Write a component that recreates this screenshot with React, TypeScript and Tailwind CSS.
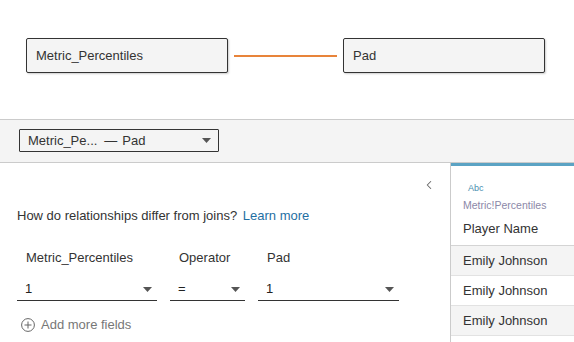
import { ChevronLeft } from "lucide-react";

// Relationship editor: canvas with two logical tables, a relationship picker
// and the field-pair editor with a data preview on the right.
const FONT = "font-['Liberation_Sans',Arial,sans-serif]";

function Caret() {
  return (
    <svg width="9" height="5" viewBox="0 0 9 5" className="flex-shrink-0">
      <path d="M0 0h9L4.5 5z" fill="#555" />
    </svg>
  );
}

function TableBox({ name }: { name: string }) {
  return (
    <div className="w-[202px] h-[35px] flex items-center px-[9px] bg-[#f4f4f4] border border-[#333] rounded-[2px] shadow-[1px_1px_2px_rgba(0,0,0,0.2)] text-[13px] text-[#333]">
      {name}
    </div>
  );
}

const fields = [
  { label: "Metric_Percentiles", value: "1", width: "w-[140px]" },
  { label: "Operator", value: "=", width: "w-[75px]" },
  { label: "Pad", value: "1", width: "w-[141px]" },
];

const rows = ["Emily Johnson", "Emily Johnson", "Emily Johnson"];

export default function App() {
  return (
    <div className={`w-[574px] h-[342px] overflow-hidden bg-white flex flex-col ${FONT}`}>
      {/* Canvas */}
      <div className="h-[119px] flex-shrink-0 flex items-start pt-[38px] pl-[26px]">
        <TableBox name="Metric_Percentiles" />
        <div className="w-[103px] h-[2px] bg-[#e8843a] mx-[6px] self-start mt-[17px]" />
        <TableBox name="Pad" />
      </div>

      {/* Relationship picker band */}
      <div className="h-[44px] flex-shrink-0 bg-[#f4f4f4] border-y border-[#cbcbcb] pt-[9px] pl-[19px]">
        <div className="w-[200px] h-[23px] bg-[#f4f4f4] border border-[#333] rounded-[1px] flex items-center pl-[8px] pr-[7px] text-[13px] text-[#333]">
          <span>Metric_Pe...</span>
          <span className="ml-[7px]">—</span>
          <span className="ml-[5px] flex-1">Pad</span>
          <Caret />
        </div>
      </div>

      <div className="flex flex-1 min-h-0">
        {/* Field editor */}
        <div className="w-[450px] flex-shrink-0 flex flex-col pl-[17px]">
          <div className="mt-[15px] h-[14px] flex justify-end pr-[14px] text-[#666]">
            <ChevronLeft size={14} strokeWidth={1.8} />
          </div>
          <div className="mt-[16px] h-[16px] leading-[16px] text-[13px] text-[#333]">
            How do relationships differ from joins?{" "}
            <span className="ml-[2px] text-[#1f6fa3]">Learn more</span>
          </div>
          <div className="mt-[26px] flex gap-[13px]">
            {fields.map((f) => (
              <div key={f.label} className={`${f.width} flex flex-col`}>
                <div className="h-[16px] leading-[16px] pl-[9px] text-[13px] text-[#333]">
                  {f.label}
                </div>
                <div className="mt-[12px] h-[23px] flex items-center pl-[8px] pr-[5px] border-b-[1.5px] border-[#333] text-[13px] text-[#222]">
                  <span className="flex-1">{f.value}</span>
                  <Caret />
                </div>
              </div>
            ))}
          </div>
          <div className="mt-[17px] h-[14px] flex items-center gap-[6px] pl-[4px] text-[13px] text-[#777]">
            <svg width="14" height="14" viewBox="0 0 14 14" className="flex-shrink-0">
              <circle cx="7" cy="7" r="6.4" fill="none" stroke="#666" strokeWidth="1" />
              <path d="M7 3.5v7M3.5 7h7" stroke="#666" strokeWidth="1" />
            </svg>
            Add more fields
          </div>
        </div>

        {/* Data preview */}
        <div className="flex-1 border-l border-[#cbcbcb] flex flex-col">
          <div className="h-[3px] bg-[#5ba3c4]" />
          <div className="h-[80px] flex-shrink-0 flex flex-col pl-[12px] border-b border-[#d4d4d4]">
            <div className="mt-[17px] pl-[5px] h-[10px] leading-[10px] text-[9px] text-[#4a8fb0]">Abc</div>
            <div className="mt-[6px] h-[12px] leading-[12px] text-[10.5px] text-[#8c88a8]">Metric!Percentiles</div>
            <div className="mt-[10px] h-[16px] leading-[16px] text-[13px] text-[#333]">Player Name</div>
          </div>
          {rows.map((r, i) => (
            <div
              key={i}
              className={`h-[30px] flex-shrink-0 flex items-center pl-[12px] pt-[1px] border-b border-[#e2e2e2] text-[13px] text-[#333] ${
                i % 2 === 0 ? "bg-[#f4f4f4]" : "bg-white"
              }`}
            >
              {r}
            </div>
          ))}
        </div>
      </div>
    </div>
  );
}
